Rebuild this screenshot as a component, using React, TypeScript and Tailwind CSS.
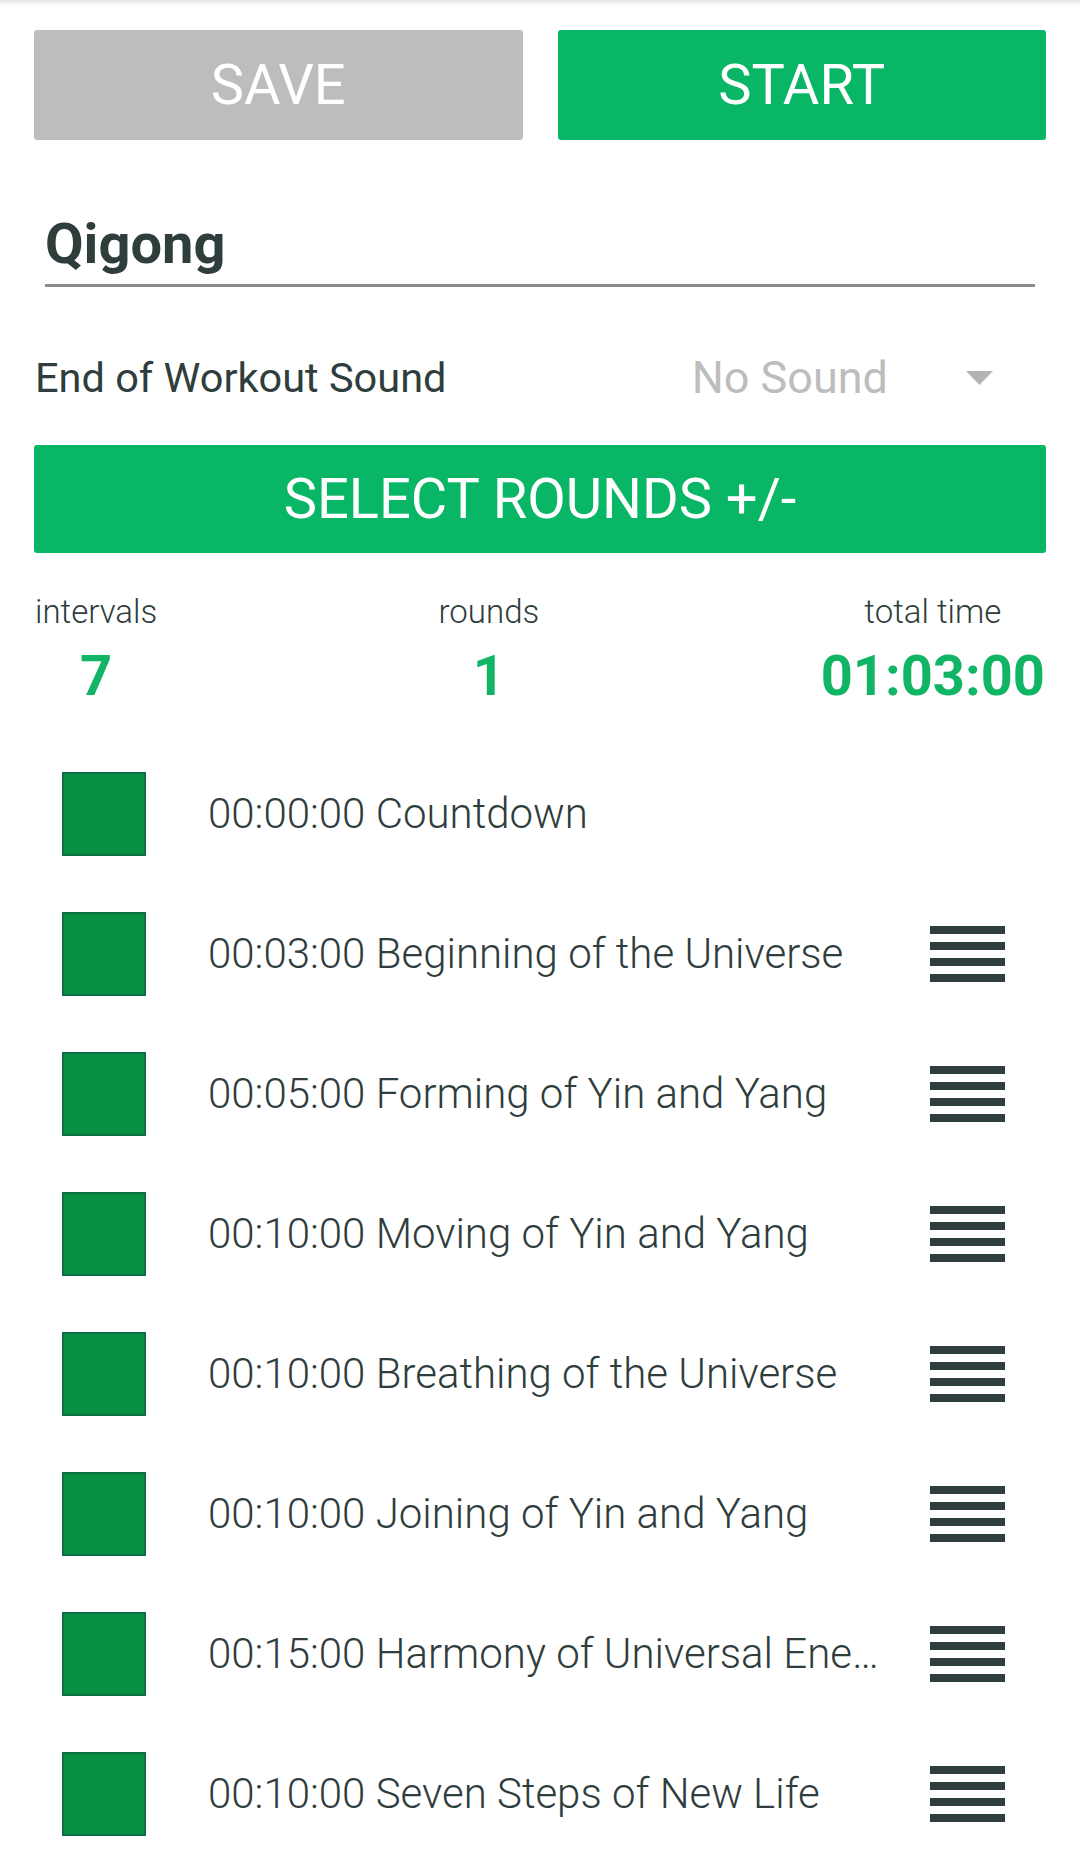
import { type ReactNode } from 'react';

const font = { fontFamily: 'Roboto, "Noto Sans", sans-serif' };

interface Interval {
  time: string;
  name: string;
  draggable?: boolean;
}

const intervals: Interval[] = [
  { time: '00:00:00', name: 'Countdown' },
  { time: '00:03:00', name: 'Beginning of the Universe', draggable: true },
  { time: '00:05:00', name: 'Forming of Yin and Yang', draggable: true },
  { time: '00:10:00', name: 'Moving of Yin and Yang', draggable: true },
  { time: '00:10:00', name: 'Breathing of the Universe', draggable: true },
  { time: '00:10:00', name: 'Joining of Yin and Yang', draggable: true },
  { time: '00:15:00', name: 'Harmony of Universal Energy', draggable: true },
  { time: '00:10:00', name: 'Seven Steps of New Life', draggable: true },
];

function ActionButton({ children, className = '' }: { children: ReactNode; className?: string }) {
  return (
    <button
      className={`flex h-[110px] items-center justify-center rounded-[3px] text-[56px] font-normal leading-none text-white ${className}`}
    >
      {children}
    </button>
  );
}

function DragHandle() {
  return (
    <div className="flex w-[75px] flex-col gap-[8px]">
      <div className="h-[8px] bg-[#2f3d3d]" />
      <div className="h-[8px] bg-[#2f3d3d]" />
      <div className="h-[8px] bg-[#2f3d3d]" />
      <div className="h-[8px] bg-[#2f3d3d]" />
    </div>
  );
}

function Stat({ label, value }: { label: string; value: string }) {
  return (
    <div className="flex flex-col items-center">
      <span className="text-[33px] font-light leading-[38px] text-[#2f3d3d]">{label}</span>
      <span className="mt-[12px] text-[56px] font-bold leading-[66px] text-[#12b565]">{value}</span>
    </div>
  );
}

export default function App() {
  return (
    <div className="min-h-[1870px] w-[1080px] bg-white" style={font}>
      {/* status bar shadow */}
      <div className="h-[6px] bg-gradient-to-b from-[#e6e6e6] to-white" />

      <div className="mt-[24px] grid grid-cols-2 gap-[35px] px-[34px]">
        <ActionButton className="bg-[#bdbdbd]">SAVE</ActionButton>
        <ActionButton className="bg-[#09b665]">START</ActionButton>
      </div>

      <div className="mx-[45px] mt-[71px] border-b-[3px] border-[#8c8c8c] pb-[7px]">
        <div className="text-[56px] font-bold leading-[66px] text-[#2f3d3d]">Qigong</div>
      </div>

      <div className="mt-[66px] flex h-[50px] items-center justify-between pl-[35px] pr-[87px]">
        <span className="text-[41.5px] leading-[50px] text-[#2f3d3d]">End of Workout Sound</span>
        <div className="flex items-center">
          <span className="text-[45px] leading-[50px] text-[#bdbdbd]">No Sound</span>
          <svg className="ml-[78px]" width="27" height="14" viewBox="0 0 27 14">
            <path d="M0 0 H27 L13.5 14 Z" fill="#b3b3b3" />
          </svg>
        </div>
      </div>

      <div className="mx-[34px] mt-[42px]">
        <button className="flex h-[108px] w-full items-center justify-center rounded-[3px] bg-[#09b665] text-[56px] font-normal leading-none text-white">
          SELECT ROUNDS +/-
        </button>
      </div>

      <div className="mt-[40px] flex items-start justify-between pl-[35px] pr-[35px]">
        <Stat label="intervals" value="7" />
        <Stat label="rounds" value="1" />
        <Stat label="total time" value="01:03:00" />
      </div>

      <div className="mt-[35px] flex flex-col">
        {intervals.map((item, i) => (
          <div key={i} className="flex h-[140px] items-center pl-[62px] pr-[75px]">
            <div className="h-[84px] w-[84px] shrink-0 border-2 border-[#0b7040] bg-[#079144]" />
            <span className="ml-[62px] min-w-0 flex-1 truncate text-[42px] font-light leading-[50px] text-[#2f3d3d]">
              {item.time} {item.name}
            </span>
            <div className="ml-[40px] w-[75px] shrink-0">{item.draggable && <DragHandle />}</div>
          </div>
        ))}
      </div>
    </div>
  );
}
